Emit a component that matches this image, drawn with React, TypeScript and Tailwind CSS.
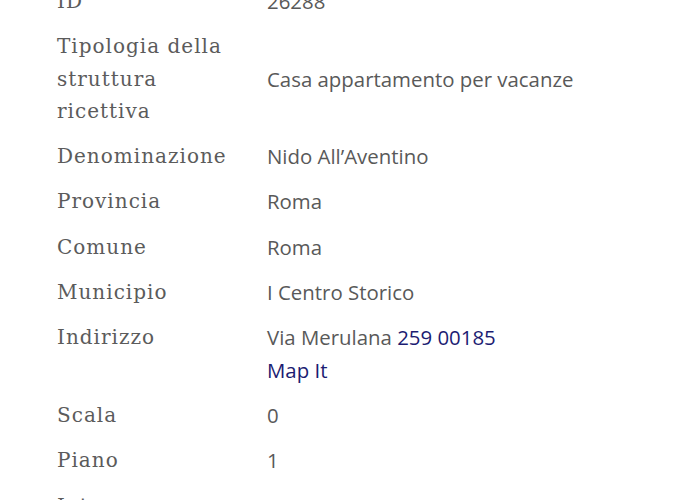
import React from "react";

const rows: { label: string; value: React.ReactNode }[] = [
  { label: "ID", value: "26288" },
  { label: "Tipologia della struttura ricettiva", value: "Casa appartamento per vacanze" },
  { label: "Denominazione", value: "Nido All’Aventino" },
  { label: "Provincia", value: "Roma" },
  { label: "Comune", value: "Roma" },
  { label: "Municipio", value: "I Centro Storico" },
  {
    label: "Indirizzo",
    value: (
      <>
        Via Merulana <a className="text-[#1c1c72]">259 00185</a>
        <br />
        <a className="text-[#1c1c72]">Map It</a>
      </>
    ),
  },
  { label: "Scala", value: "0" },
  { label: "Piano", value: "1" },
  { label: "Interno", value: "2" },
];

export default function App() {
  return (
    <div className="w-[700px] h-[500px] overflow-hidden bg-white">
      <table className="ml-[57px] mt-[-22px] border-collapse">
        <tbody>
          {rows.map((r, i) => (
            <tr key={i}>
              <td
                className="w-[210px] align-top pt-[7px] pb-[6px] pr-[34px] text-[20px] leading-[32.3px] text-[#5b5b5b] tracking-[1px]"
                style={{ fontFamily: '"DejaVu Serif", serif' }}
              >
                {r.label}
              </td>
              <td
                className="align-middle pt-[7px] pb-[6px] text-[20.4px] leading-[32.3px] text-[#595959]"
                style={{ fontFamily: '"Open Sans", sans-serif' }}
              >
                {r.value}
              </td>
            </tr>
          ))}
        </tbody>
      </table>
    </div>
  );
}
